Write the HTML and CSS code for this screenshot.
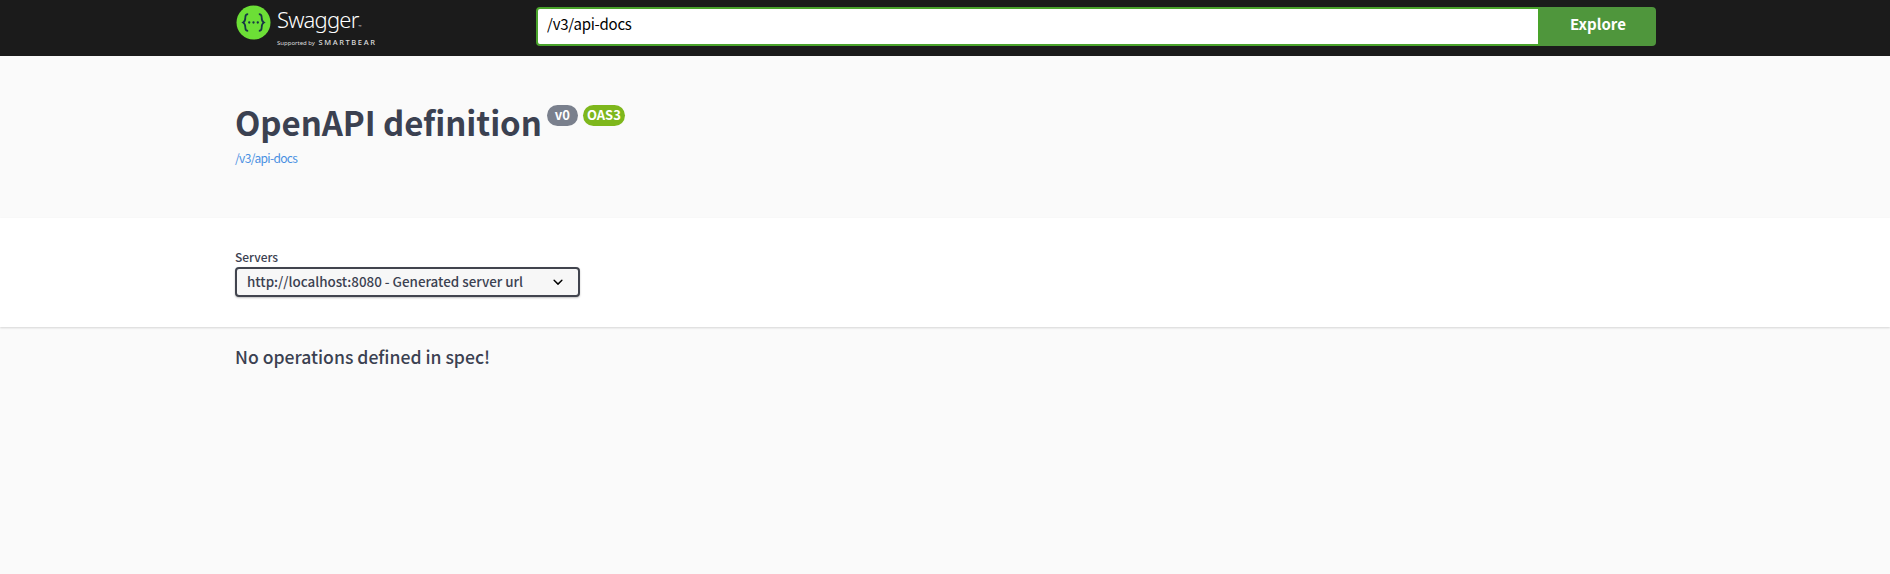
FILE: index.html
```html
<!DOCTYPE html>
<html lang="en">
<head>
	<meta charset="utf-8">
	<title>Swagger UI</title>
	<link rel="stylesheet" href="styles.css">
</head>
<body>
	<header class="topbar">
		<div class="wrapper topbar-row">
			<a href="#" class="logo">
				<svg class="logo-mark" viewBox="0 0 36 36" width="35" height="35">
					<circle cx="18" cy="18" r="17.5" fill="#6cdf36"></circle>
					<path d="M12.5 9.5c-2.6 0-2.9 1.4-2.9 3.2 0 2.3.1 3.9-2.3 5.3 2.4 1.4 2.3 3 2.3 5.3 0 1.8.3 3.2 2.9 3.2M23.5 9.5c2.6 0 2.9 1.4 2.9 3.2 0 2.3-.1 3.9 2.3 5.3-2.4 1.4-2.3 3-2.3 5.3 0 1.8-.3 3.2-2.9 3.2" fill="none" stroke="#173646" stroke-width="1.8"></path>
					<circle cx="13.6" cy="18" r="1.2" fill="#173646"></circle>
					<circle cx="18" cy="18" r="1.2" fill="#173646"></circle>
					<circle cx="22.4" cy="18" r="1.2" fill="#173646"></circle>
				</svg>
				<span class="logo-text">
					<span class="logo-name">Swagger<small>™</small></span>
					<span class="logo-sub">Supported by <b>SMARTBEAR</b></span>
				</span>
			</a>
			<form class="download-url">
				<input class="url-input" type="text" value="/v3/api-docs">
				<button class="explore" type="button">Explore</button>
			</form>
		</div>
	</header>

	<section class="info">
		<div class="wrapper">
			<h1 class="title">OpenAPI definition
				<span class="badges">
					<span class="badge badge-version">v0</span>
					<span class="badge badge-oas">OAS3</span>
				</span>
			</h1>
			<a href="#" class="spec-link">/v3/api-docs</a>
		</div>
	</section>

	<section class="scheme-container">
		<div class="wrapper">
			<label class="servers-label" for="servers">Servers</label>
			<select class="servers" id="servers">
				<option>http://localhost:8080 - Generated server url</option>
			</select>
		</div>
	</section>

	<main class="wrapper">
		<h3 class="no-ops">No operations defined in spec!</h3>
	</main>
</body>
</html>
```

FILE: styles.css
```css
*{
	box-sizing: border-box;
	margin: 0;
}
body{
	background-color: #fafafa;
	color: #3b4151;
	font-family: "Noto Sans CJK KR", "Noto Sans", sans-serif;
}
.wrapper{
	width: 1421px;
	margin-left: 235px;
}
.topbar{
	background-color: #1b1b1b;
	height: 56px;
	padding-top: 6px;
}
.topbar-row{
	display: flex;
	align-items: flex-start;
}
.logo{
	display: flex;
	align-items: flex-start;
	width: 301px;
	margin-top: -1px;
	padding-left: 1px;
	color: #fff;
	text-decoration: none;
}
.logo-text{
	display: flex;
	flex-direction: column;
	margin-left: 6px;
}
.logo-name{
	font-family: "Noto Sans", sans-serif;
	font-size: 22px;
	font-weight: 300;
	line-height: 23px;
	letter-spacing: -0.8px;
	margin-top: 3px;
}
.logo-name small{
	font-size: 4px;
}
.logo-sub{
	font-family: "Noto Sans", sans-serif;
	font-size: 6px;
	line-height: 9px;
	color: #ddd;
}
.logo-sub b{
	font-weight: 500;
	font-size: 7.5px;
	letter-spacing: 1.6px;
	margin-left: 2px;
}
.download-url{
	display: flex;
	width: 1120px;
	height: 39px;
	margin-top: 1px;
}
.url-input{
	flex: 1;
	border: 2px solid #49a32b;
	border-radius: 4px 0 0 4px;
	padding: 0 9px 6px;
	font-family: inherit;
	font-size: 15px;
	letter-spacing: -0.25px;
	color: #000;
	background-color: #fff;
	outline: none;
}
.explore{
	width: 116px;
	border: none;
	border-radius: 0 4px 4px 0;
	padding-bottom: 8px;
	background-color: #4f963c;
	color: #fff;
	font-family: inherit;
	font-size: 15px;
	font-weight: 700;
}
.info{
	height: 162px;
	padding-top: 44px;
}
.title{
	display: flex;
	align-items: flex-start;
	gap: 5px;
	font-size: 33px;
	font-weight: 700;
	letter-spacing: -0.07px;
	line-height: 45px;
	color: #3b4151;
}
.badges{
	display: flex;
	gap: 5px;
	margin-top: 5px;
	letter-spacing: 0;
}
.badge{
	font-size: 13px;
	font-weight: 700;
	line-height: 20px;
	height: 21px;
	padding: 0 4px;
	border-radius: 57px;
	color: #fff;
}
.badge-version{
	background-color: #7a808d;
	padding: 0 8px;
}
.badge-oas{
	background-color: #7eb71c;
}
.spec-link{
	display: block;
	margin-top: 5px;
	font-size: 12px;
	letter-spacing: -0.65px;
	line-height: 16px;
	color: #4990e2;
	text-decoration: none;
}
.scheme-container{
	height: 109px;
	padding-top: 31px;
	background-color: #fff;
	box-shadow: 0 1px 2px 0 rgba(0, 0, 0, 0.15);
}
.servers-label{
	display: block;
	font-size: 12px;
	font-weight: 500;
	line-height: 16px;
}
.servers{
	display: block;
	width: 345px;
	height: 30px;
	margin-top: 2px;
	padding: 0 10px 2px;
	appearance: none;
	border: 2px solid #41444e;
	border-radius: 4px;
	background: #f7f7f7 url('data:image/svg+xml;utf8,<svg xmlns="http://www.w3.org/2000/svg" viewBox="0 0 20 20"><path d="M13.418 7.859a.695.695 0 0 1 .978 0 .68.68 0 0 1 0 .969l-3.908 3.83a.697.697 0 0 1-.979 0l-3.908-3.83a.68.68 0 0 1 0-.969.695.695 0 0 1 .978 0L10 11z"/></svg>') no-repeat right 10px center / 20px;
	box-shadow: 0 1px 2px 0 rgba(0, 0, 0, 0.25);
	color: #3b4151;
	font-family: inherit;
	font-size: 13.4px;
	font-weight: 500;
}
.no-ops{
	margin-top: 17px;
	font-size: 17.6px;
	font-weight: 500;
	line-height: 26px;
}
```
